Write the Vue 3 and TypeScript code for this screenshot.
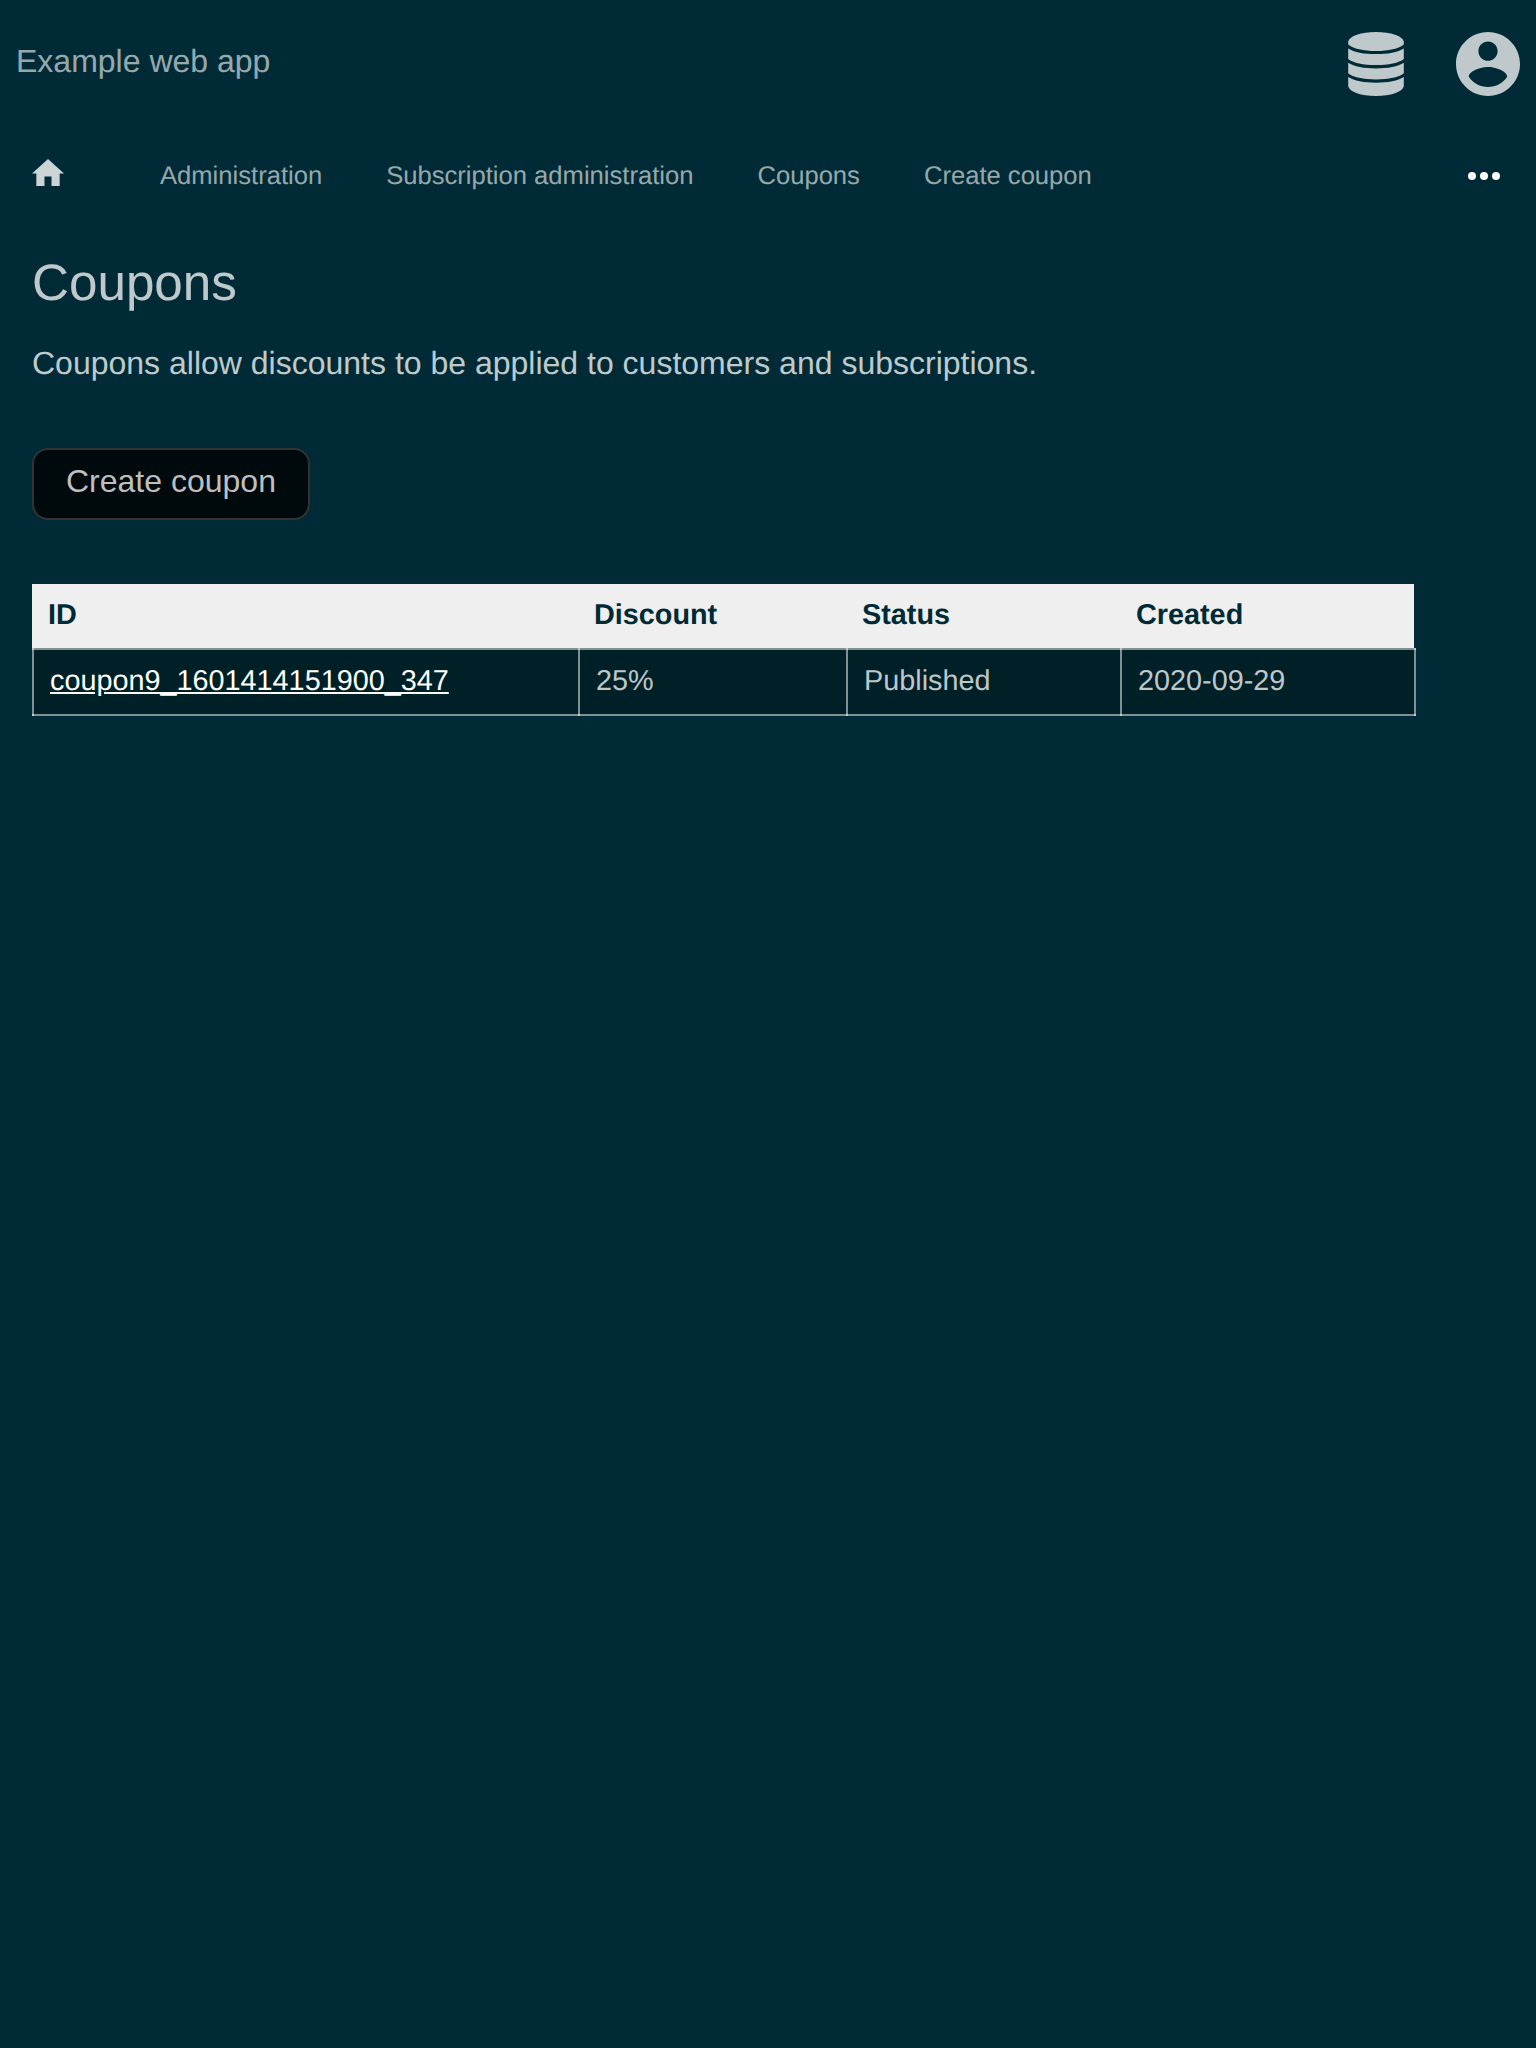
<script setup lang="ts">
interface Coupon {
  id: string
  discount: string
  status: string
  created: string
}

const links: string[] = ['Administration', 'Subscription administration', 'Coupons', 'Create coupon']
const columns: string[] = ['ID', 'Discount', 'Status', 'Created']
const coupons: Coupon[] = [
  { id: 'coupon9_1601414151900_347', discount: '25%', status: 'Published', created: '2020-09-29' },
]
</script>

<template>
  <div class="page">
    <header class="header">
      <a class="title">Example web app</a>
      <div class="menus">
        <svg class="database" viewBox="0 0 56 64">
          <path d="M.2 9.6C1.5 4 13 0 28 0s26.500 4 27.800 9.600v2.900C51 16.700 40.500 19 28 19S5 16.700.2 12.500z" />
          <path d="M.2 16.400C6 20.200 16 22.100 28 22.100s22-1.900 27.800-5.700v10.500C51 30.800 40.500 33 28 33S5 30.800.2 26.900z" />
          <path d="M.2 30.700C6 34.500 16 36.400 28 36.400s22-1.900 27.800-5.700v10.600C51 45.300 40.500 47.500 28 47.500S5 45.300.2 41.300z" />
          <path d="M.2 45C6 48.800 16 50.700 28 50.700s22-1.900 27.800-5.700v9.300C54.500 60 43 64 28 64S1.500 60 .2 54.300z" />
        </svg>
        <svg class="account" viewBox="2 2 20 20">
          <path d="M12 2C6.48 2 2 6.48 2 12s4.48 10 10 10 10-4.48 10-10S17.52 2 12 2zm0 3c1.66 0 3 1.34 3 3s-1.34 3-3 3-3-1.34-3-3 1.34-3 3-3zm0 14.2c-2.5 0-4.71-1.28-6-3.22.03-1.99 4-3.08 6-3.08 1.99 0 5.97 1.09 6 3.08-1.29 1.94-3.5 3.22-6 3.22z" />
        </svg>
      </div>
    </header>

    <nav class="nav">
      <svg class="home" viewBox="2 3 20 17"><path d="M9.800 20v-6h4.400v6h5.100v-8H22L12 3 2 12h2.700v8z" /></svg>
      <a v-for="link in links" :key="link" class="link">{{ link }}</a>
      <svg class="more" viewBox="0 0 32 8">
        <circle cx="4" cy="4" r="4" /><circle cx="16" cy="4" r="4" /><circle cx="28" cy="4" r="4" />
      </svg>
    </nav>

    <main class="content">
      <h1>Coupons</h1>
      <p>Coupons allow discounts to be applied to customers and subscriptions.</p>
      <button class="create">Create coupon</button>

      <div class="table">
        <div class="head">
          <div v-for="column in columns" :key="column">{{ column }}</div>
        </div>
        <div v-for="coupon in coupons" :key="coupon.id" class="row">
          <div class="cell"><a class="id">{{ coupon.id }}</a></div>
          <div class="cell">{{ coupon.discount }}</div>
          <div class="cell">{{ coupon.status }}</div>
          <div class="cell">{{ coupon.created }}</div>
        </div>
      </div>
    </main>
  </div>
</template>

<style>
html,
body {
  background: #002b36;
}
</style>

<style scoped>
.page {
  min-height: 2048px;
  background: #002b36;
  color: rgba(255, 255, 255, 0.75);
  font-family: "Liberation Sans", Arial, sans-serif;
  font-size: 32px;
  text-rendering: geometricPrecision;
}

.header {
  display: flex;
  align-items: center;
  justify-content: space-between;
  height: 128px;
  padding: 0 16px;
}

.title {
  line-height: 36px;
  margin-bottom: 6px;
  color: rgba(255, 255, 255, 0.6);
}

.menus {
  display: flex;
  gap: 52px;
  fill: rgba(255, 255, 255, 0.75);
}

.database {
  width: 56px;
  height: 64px;
}

.account {
  width: 64px;
  height: 64px;
}

.nav {
  display: flex;
  align-items: center;
  height: 96px;
  padding: 0 36px 0 32px;
  font-size: 25.6px;
}

.home {
  width: 32px;
  height: 27.2px;
  margin-bottom: 7.2px;
  fill: rgba(255, 255, 255, 0.8);
}

.link {
  margin-left: 64px;
  line-height: 30px;
  color: rgba(255, 255, 255, 0.6);
}

.home + .link {
  margin-left: 96px;
}

.more {
  width: 32px;
  height: 8px;
  margin-left: auto;
  fill: #fff;
}

.content {
  padding: 0 32px;
}

h1 {
  margin: 0;
  padding-top: 30px;
  font-size: 51.2px;
  font-weight: 400;
  line-height: 58px;
}

p {
  margin: 32px 0 66px;
  line-height: 38px;
}

.create {
  display: block;
  height: 72px;
  padding: 0 32px 6px;
  border: 2px solid #333;
  border-radius: 16px;
  background: rgba(0, 0, 0, 0.75);
  color: #bfbfbf;
  font: inherit;
}

.table {
  width: 1384px;
  margin-top: 64px;
  font-size: 28.8px;
}

.head {
  display: grid;
  grid-template-columns: 546px 268px 274px 294px;
  width: 1382px;
  height: 64px;
  background: #efefef;
  color: #002b36;
  font-weight: 700;
  line-height: 62px;
}

.head > div {
  padding-left: 16px;
}

.row {
  display: grid;
  grid-template-columns: 546px 268px 274px 296px;
  height: 64px;
  border: solid rgba(255, 255, 255, 0.5);
  border-width: 2px 0;
  background: #002028;
}

/* Column rules run through the row rules so that crossings show brighter. */
.cell {
  margin: -2px 0;
  padding: 2px 16px;
  border-left: 2px solid rgba(255, 255, 255, 0.5);
  line-height: 62px;
}

.cell:last-child {
  border-right: 2px solid rgba(255, 255, 255, 0.5);
}

.id {
  color: #fff;
  text-decoration: underline;
}
</style>
